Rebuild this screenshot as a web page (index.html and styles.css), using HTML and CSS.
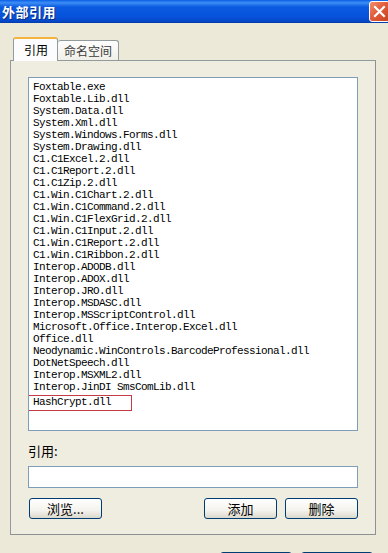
FILE: index.html
```html
<!DOCTYPE html>
<html lang="zh-CN">

<head>
    <meta charset="UTF-8" />
    <meta name="viewport" content="width=device-width, initial-scale=1.0" />
    <title>外部引用</title>
    <link rel="stylesheet" href="styles.css">
</head>

<body>
    <div class="window">
        <div class="titlebar">
            <span class="title">外部引用</span>
            <button class="close" aria-label="关闭">
                <svg width="13" height="13" viewBox="0 0 13 13">
                    <path d="M2 2 L11 11 M11 2 L2 11" stroke="#fff" stroke-width="2.2" stroke-linecap="square" />
                </svg>
            </button>
        </div>

        <div class="content">
            <div class="tabs">
                <div class="tab active">引用</div>
                <div class="tab">命名空间</div>
            </div>

            <div class="panel">
                <ul class="listbox">
                    <li>Foxtable.exe</li>
                    <li>Foxtable.Lib.dll</li>
                    <li>System.Data.dll</li>
                    <li>System.Xml.dll</li>
                    <li>System.Windows.Forms.dll</li>
                    <li>System.Drawing.dll</li>
                    <li>C1.C1Excel.2.dll</li>
                    <li>C1.C1Report.2.dll</li>
                    <li>C1.C1Zip.2.dll</li>
                    <li>C1.Win.C1Chart.2.dll</li>
                    <li>C1.Win.C1Command.2.dll</li>
                    <li>C1.Win.C1FlexGrid.2.dll</li>
                    <li>C1.Win.C1Input.2.dll</li>
                    <li>C1.Win.C1Report.2.dll</li>
                    <li>C1.Win.C1Ribbon.2.dll</li>
                    <li>Interop.ADODB.dll</li>
                    <li>Interop.ADOX.dll</li>
                    <li>Interop.JRO.dll</li>
                    <li>Interop.MSDASC.dll</li>
                    <li>Interop.MSScriptControl.dll</li>
                    <li>Microsoft.Office.Interop.Excel.dll</li>
                    <li>Office.dll</li>
                    <li>Neodynamic.WinControls.BarcodeProfessional.dll</li>
                    <li>DotNetSpeech.dll</li>
                    <li>Interop.MSXML2.dll</li>
                    <li>Interop.JinDI SmsComLib.dll</li>
                    <li class="marked">HashCrypt.dll</li>
                </ul>

                <label class="field-label" for="ref">引用:</label>
                <input class="field" type="text" id="ref" />

                <div class="actions">
                    <button class="btn">浏览...</button>
                    <span class="spacer"></span>
                    <button class="btn">添加</button>
                    <button class="btn">删除</button>
                </div>
            </div>

            <div class="footer">
                <button class="btn wide"></button>
                <button class="btn wide"></button>
            </div>
        </div>
    </div>
</body>

</html>
```

FILE: styles.css
```css
body {
    margin: 0;
    padding: 0;
    background: #ece9d8;
    font-family: "Noto Sans CJK SC", "Liberation Sans", sans-serif;
    font-size: 12px;
    color: #000;
    overflow: hidden;
}

.window {
    width: 388px;
    height: 553px;
    overflow: hidden;
}

.titlebar {
    height: 23px;
    display: flex;
    align-items: center;
    justify-content: space-between;
    background: linear-gradient(to bottom, #0a5fe6 0%, #3d8ef5 12%, #0b5be0 30%, #0753dc 70%, #0648c8 92%, #033aa8 100%);
}

.title {
    color: #fff;
    font-weight: bold;
    font-size: 13px;
    margin-left: 2px;
    letter-spacing: 0.5px;
    text-shadow: 1px 1px 0 #0a2c82;
}

.close {
    width: 21px;
    height: 21px;
    margin-right: -2px;
    padding: 0;
    border: 1px solid #fff;
    border-radius: 3px;
    background: linear-gradient(135deg, #f0926e 0%, #e25b3a 45%, #c9421f 100%);
    display: flex;
    align-items: center;
    justify-content: center;
}

.content {
    padding: 14px 0 0 10px;
}

.tabs {
    display: flex;
    align-items: flex-end;
    height: 23px;
    margin-left: 3px;
}

.tab {
    height: 19px;
    padding: 0 6px 0 6px;
    line-height: 19px;
    border: 1px solid #919b9c;
    border-bottom: none;
    border-radius: 3px 3px 0 0;
    background: linear-gradient(to bottom, #fefefe, #f0efe8);
    color: #3a3a3a;
    font-size: 12px;
}

.tab.active {
    height: 22px;
    width: 24px;
    line-height: 22px;
    padding: 0 9px 0 10px;
    background: #fcfcfe;
    color: #000;
    border-top: 2px solid #f3b33c;
    margin-bottom: -1px;
    position: relative;
    z-index: 1;
}

.tab + .tab {
    border-left: none;
}

.panel {
    border: 1px solid #919b9c;
    border-right-color: #8c9193;
    border-bottom-color: #8c9193;
    background: #efece0;
    padding: 16px 17px 0 17px;
    box-sizing: border-box;
    width: 366px;
    height: 475px;
    display: flex;
    flex-direction: column;
}

.listbox {
    list-style: none;
    margin: 0;
    height: 354px;
    box-sizing: border-box;
    padding: 3px 0 0 4px;
    border: 1px solid #7f9db9;
    background: #fff;
    font-family: "Liberation Mono", monospace;
    font-size: 11px;
    letter-spacing: -0.6px;
    line-height: 12px;
    overflow: hidden;
}

.listbox li {
    white-space: nowrap;
}

.listbox .marked {
    margin: 2px 0 0 -5px;
    padding: 0 0 2px 4px;
    width: 98px;
    border: 1px solid #c33b45;
}

.field-label {
    margin-top: 13px;
    font-size: 13px;
    line-height: 14px;
}

.field {
    margin: 8px 0 0;
    height: 22px;
    box-sizing: border-box;
    border: 1px solid #7f9db9;
    background: #fff;
    padding: 0 3px;
}

.actions {
    display: flex;
    margin-top: 10px;
    gap: 8px;
    padding-left: 1px;
}

.spacer {
    flex: 1;
}

.btn {
    width: 73px;
    height: 21px;
    padding: 0;
    border: 1px solid #003c74;
    border-radius: 3px;
    background: linear-gradient(to bottom, #ffffff 0%, #f4f3ee 60%, #dcd8cc 100%);
    font-family: "Noto Sans CJK SC", "Liberation Sans", sans-serif;
    font-size: 13px;
    line-height: 18px;
    color: #000;
}

.footer {
    display: flex;
    gap: 9px;
    margin: 17px 0 0 210px;
}

.btn.wide {
    width: 72px;
}
```
